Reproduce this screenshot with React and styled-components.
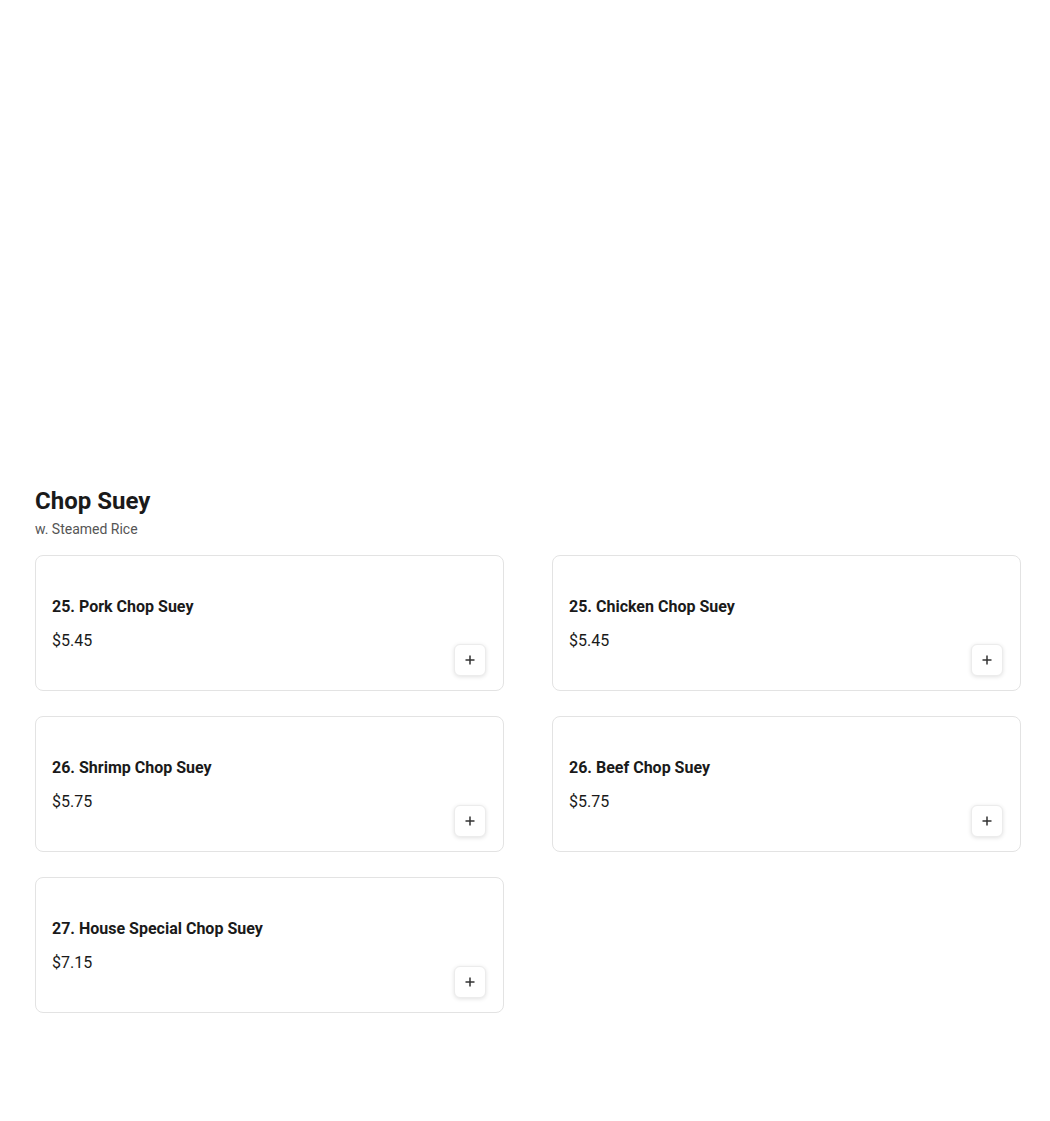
import styled, { createGlobalStyle } from "styled-components";

const GlobalStyle = createGlobalStyle`
  body {
    margin: 0;
    background: #ffffff;
    font-family: Roboto, "Liberation Sans", Arial, sans-serif;
    color: #1a1a1a;
  }
`;

const Page = styled.div`
  width: 1050px;
  min-height: 1121px;
  box-sizing: border-box;
  padding: 486px 29px 0 35px;
`;

const Section = styled.section`
  width: 986px;
`;

const Title = styled.h2`
  margin: 0;
  font-size: 24px;
  line-height: 30px;
  font-weight: 700;
  color: #1a1a1a;
`;

const Subtitle = styled.p`
  margin: 4px 0 0;
  font-size: 14px;
  line-height: 18px;
  color: #555555;
`;

const Grid = styled.div`
  margin-top: 17px;
  display: grid;
  grid-template-columns: 469px 469px;
  column-gap: 48px;
  row-gap: 25px;
`;

const Card = styled.div`
  height: 136px;
  box-sizing: border-box;
  border: 1px solid #e3e3e3;
  border-radius: 8px;
  padding: 16px 17px 14px 16px;
  display: grid;
  grid-template-columns: 1fr auto;
  background: #fff;
`;

const Info = styled.div`
  padding-top: 25px;
  display: flex;
  flex-direction: column;
  gap: 14px;
`;

const Name = styled.div`
  font-size: 16px;
  line-height: 20px;
  font-weight: 700;
  color: #1a1a1a;
`;

const Price = styled.div`
  font-size: 16px;
  line-height: 20px;
  color: #1a1a1a;
`;

const AddBtn = styled.button`
  align-self: end;
  width: 32px;
  height: 32px;
  padding: 0;
  border: 1px solid #ececec;
  border-radius: 6px;
  background: #fff;
  box-shadow: 0 1px 4px rgba(0, 0, 0, 0.12);
  display: flex;
  align-items: center;
  justify-content: center;
  cursor: pointer;
`;

const PlusIcon = () => (
  <svg width="10" height="10" viewBox="0 0 10 10">
    <path d="M5 0.5v9M0.5 5h9" stroke="#333" strokeWidth="1.5" />
  </svg>
);

const items = [
  { name: "25. Pork Chop Suey", price: "$5.45" },
  { name: "25. Chicken Chop Suey", price: "$5.45" },
  { name: "26. Shrimp Chop Suey", price: "$5.75" },
  { name: "26. Beef Chop Suey", price: "$5.75" },
  { name: "27. House Special Chop Suey", price: "$7.15" },
];

export default function App() {
  return (
    <>
      <GlobalStyle />
      <Page>
        <Section>
          <Title>Chop Suey</Title>
          <Subtitle>w. Steamed Rice</Subtitle>
          <Grid>
            {items.map((item) => (
              <Card key={item.name}>
                <Info>
                  <Name>{item.name}</Name>
                  <Price>{item.price}</Price>
                </Info>
                <AddBtn aria-label="Add">
                  <PlusIcon />
                </AddBtn>
              </Card>
            ))}
          </Grid>
        </Section>
      </Page>
    </>
  );
}
